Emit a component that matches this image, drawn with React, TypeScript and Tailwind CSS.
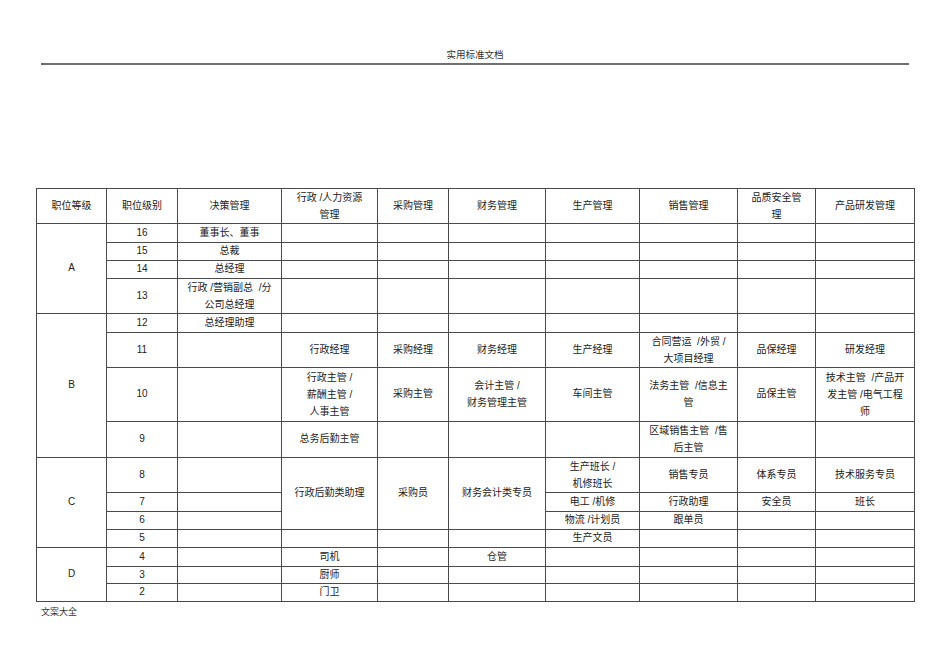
import React from "react";

type Cell = { text?: React.ReactNode; rowSpan?: number };

const cols = [70, 71, 104, 96, 71, 97, 94, 98, 78, 99];

const headers: React.ReactNode[] = [
  "职位等级",
  "职位级别",
  "决策管理",
  <>行政 /人力资源<br />管理</>,
  "采购管理",
  "财务管理",
  "生产管理",
  "销售管理",
  <>品质安全管<br />理</>,
  "产品研发管理",
];

// each row: height, then cells after the grade column
const rows: { h: string; grade?: { text: string; span: number }; cells: Cell[] }[] = [
  { h: "h-[19px]", grade: { text: "A", span: 4 }, cells: [{ text: "16" }, { text: "董事长、董事" }, {}, {}, {}, {}, {}, {}, {}] },
  { h: "h-[18px]", cells: [{ text: "15" }, { text: "总裁" }, {}, {}, {}, {}, {}, {}, {}] },
  { h: "h-[18px]", cells: [{ text: "14" }, { text: "总经理" }, {}, {}, {}, {}, {}, {}, {}] },
  { h: "h-[35px]", cells: [{ text: "13" }, { text: <>行政 /营销副总 &nbsp;/分<br />公司总经理</> }, {}, {}, {}, {}, {}, {}, {}] },
  { h: "h-[19px]", grade: { text: "B", span: 4 }, cells: [{ text: "12" }, { text: "总经理助理" }, {}, {}, {}, {}, {}, {}, {}] },
  {
    h: "h-[35px]",
    cells: [
      { text: "11" },
      {},
      { text: "行政经理" },
      { text: "采购经理" },
      { text: "财务经理" },
      { text: "生产经理" },
      { text: <>合同营运 &nbsp;/外贸 /<br />大项目经理</> },
      { text: "品保经理" },
      { text: "研发经理" },
    ],
  },
  {
    h: "h-[54px]",
    cells: [
      { text: "10" },
      {},
      { text: <>行政主管 /<br />薪酬主管 /<br />人事主管</> },
      { text: "采购主管" },
      { text: <>会计主管 /<br />财务管理主管</> },
      { text: "车间主管" },
      { text: <>法务主管 &nbsp;/信息主<br />管</> },
      { text: "品保主管" },
      { text: <>技术主管 &nbsp;/产品开<br />发主管 /电气工程<br />师</> },
    ],
  },
  {
    h: "h-[36px]",
    cells: [
      { text: "9" },
      {},
      { text: "总务后勤主管" },
      {},
      {},
      {},
      { text: <>区域销售主管 &nbsp;/售<br />后主管</> },
      {},
      {},
    ],
  },
  {
    h: "h-[35px]",
    grade: { text: "C", span: 4 },
    cells: [
      { text: "8" },
      {},
      { text: "行政后勤类助理", rowSpan: 3 },
      { text: "采购员", rowSpan: 3 },
      { text: "财务会计类专员", rowSpan: 3 },
      { text: <>生产班长 /<br />机修班长</> },
      { text: "销售专员" },
      { text: "体系专员" },
      { text: "技术服务专员" },
    ],
  },
  { h: "h-[19px]", cells: [{ text: "7" }, {}, { text: "电工 /机修" }, { text: "行政助理" }, { text: "安全员" }, { text: "班长" }] },
  { h: "h-[18px]", cells: [{ text: "6" }, {}, { text: "物流 /计划员" }, { text: "跟单员" }, {}, {}] },
  { h: "h-[18px]", cells: [{ text: "5" }, {}, {}, {}, {}, { text: "生产文员" }, {}, {}, {}] },
  { h: "h-[19px]", grade: { text: "D", span: 3 }, cells: [{ text: "4" }, {}, { text: "司机" }, {}, { text: "仓管" }, {}, {}, {}, {}] },
  { h: "h-[17px]", cells: [{ text: "3" }, {}, { text: "厨师" }, {}, {}, {}, {}, {}, {}] },
  { h: "h-[18px]", cells: [{ text: "2" }, {}, { text: "门卫" }, {}, {}, {}, {}, {}, {}] },
];

const td = "border border-[#4a4a4a] p-0 text-center align-middle";

// multi-line cells get a slightly taller line
const lead = (t: React.ReactNode) => (typeof t === "string" || t === undefined ? "leading-[16px]" : "leading-[17px]");

export default function App() {
  return (
    <div
      className="w-[950px] h-[672px] bg-white text-[#222] overflow-hidden"
      style={{ fontFamily: '"Liberation Sans", "Noto Sans CJK SC", sans-serif' }}
    >
      <div className="pt-[48px] text-center text-[9.5px] leading-[14px] text-[#333]">实用标准文档</div>
      <div className="mx-[41px] mt-[1px] h-[1.5px] bg-[#707070]" />

      <table className="ml-[36px] mt-[123px] w-[878px] table-fixed border-collapse text-[10px]">
        <colgroup>
          {cols.map((w, i) => (
            <col key={i} style={{ width: w }} />
          ))}
        </colgroup>
        <thead>
          <tr className="h-[35px]">
            {headers.map((h, i) => (
              <th key={i} className={`${td} ${lead(h)} font-normal`}>
                {h}
              </th>
            ))}
          </tr>
        </thead>
        <tbody>
          {rows.map((r, i) => (
            <tr key={i} className={r.h}>
              {r.grade && (
                <td rowSpan={r.grade.span} className={`${td} leading-[16px]`}>
                  {r.grade.text}
                </td>
              )}
              {r.cells.map((c, j) => (
                <td key={j} rowSpan={c.rowSpan} className={`${td} ${lead(c.text)}`}>
                  {c.text}
                </td>
              ))}
            </tr>
          ))}
        </tbody>
      </table>

      <div className="ml-[41px] mt-[3px] text-[9px] leading-[14px] text-[#333]">文案大全</div>
    </div>
  );
}
